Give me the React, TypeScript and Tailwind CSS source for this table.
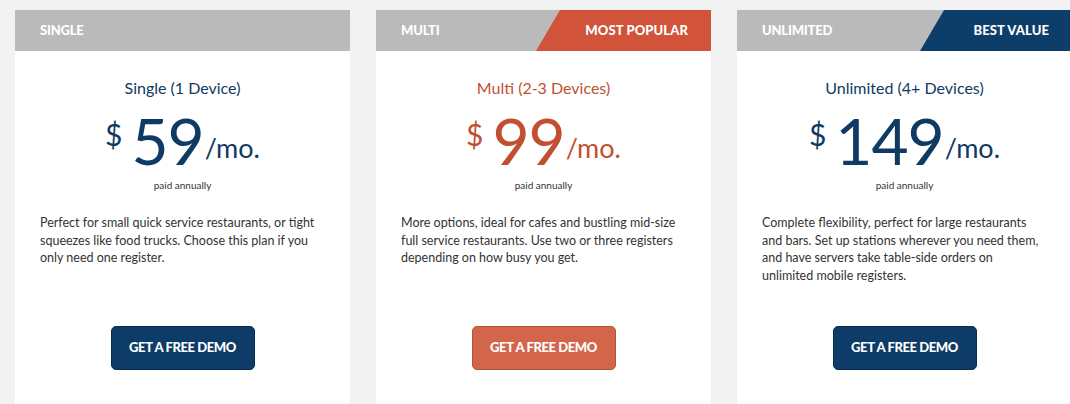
const plans = [
  {
    key: 'single',
    label: 'SINGLE',
    badge: null as null | { text: string; bg: string; w: string },
    title: 'Single (1 Device)',
    price: '59',
    accent: 'text-[#0f3a63]',
    lines: [
      'Perfect for small quick service restaurants, or tight',
      'squeezes like food trucks. Choose this plan if you',
      'only need one register.',
    ],
    btn: 'bg-[#0c3c67] border-[#072c4d]',
  },
  {
    key: 'multi',
    label: 'MULTI',
    badge: { text: 'MOST POPULAR', bg: 'bg-[#d0533a]', w: 'w-[175px]' },
    title: 'Multi (2-3 Devices)',
    price: '99',
    accent: 'text-[#c24f30]',
    lines: [
      'More options, ideal for cafes and bustling mid-size',
      'full service restaurants. Use two or three registers',
      'depending on how busy you get.',
    ],
    btn: 'bg-[#d3654b] border-[#b8513a]',
  },
  {
    key: 'unlimited',
    label: 'UNLIMITED',
    badge: { text: 'BEST VALUE', bg: 'bg-[#0d3e6a]', w: 'w-[152px]' },
    title: 'Unlimited (4+ Devices)',
    price: '149',
    accent: 'text-[#0f3a63]',
    lines: [
      'Complete flexibility, perfect for large restaurants',
      'and bars. Set up stations wherever you need them,',
      'and have servers take table-side orders on',
      'unlimited mobile registers.',
    ],
    btn: 'bg-[#0c3c67] border-[#072c4d]',
  },
]

function PlanCard({ plan }: { plan: (typeof plans)[number] }) {
  return (
    <div className="flex h-[420px] w-[335px] shrink-0 flex-col bg-white">
      {/* header strip */}
      <div className="relative flex h-[41px] items-center bg-[#bababa] pl-[25px] text-[13px] font-black tracking-[-0.2px] text-white">
        {plan.label}
        {plan.badge && (
          <div
            className={`absolute right-0 top-0 flex h-full items-center justify-end pr-[23px] text-[13px] font-black tracking-[0.1px] ${plan.badge.bg} ${plan.badge.w} [clip-path:polygon(24px_0,100%_0,100%_100%,0_100%)]`}
          >
            {plan.badge.text}
          </div>
        )}
      </div>

      {/* body */}
      <div className="flex flex-col items-center pt-[27px]">
        <h3 className={`text-[16px] leading-[20px] ${plan.accent}`}>{plan.title}</h3>

        <div className={`mt-[11px] flex items-start ${plan.accent}`}>
          <span className="mr-[9px] mt-[10px] text-[30px] leading-none">$</span>
          <span className="text-[64px] leading-none tracking-[-1px]">{plan.price}</span>
          <span className="ml-[1px] mt-[25px] text-[27px] leading-none">/mo.</span>
        </div>

        <p className="mt-[6px] text-[10px] leading-[12px] text-[#333]">paid annually</p>

        <div className="mt-[23px] w-full whitespace-nowrap px-[25px] text-left text-[12.5px] leading-[17.5px] text-[#333]">
          {plan.lines.map((l, i) => (
            <span key={i} className="block">
              {l}
            </span>
          ))}
        </div>
      </div>

      {/* CTA */}
      <div className="mt-auto flex justify-center pb-[60px]">
        <button
          className={`h-[44px] w-[144px] rounded-[5px] border text-[13px] font-black tracking-[-0.4px] text-white ${plan.btn}`}
        >
          GET A FREE DEMO
        </button>
      </div>
    </div>
  )
}

export default function App() {
  return (
    <div
      className="flex h-[404px] gap-[26px] overflow-hidden bg-[#f2f2f2] pl-[15px] pt-[10px]"
      style={{ fontFamily: 'Lato, "Open Sans", sans-serif' }}
    >
      {plans.map((p) => (
        <PlanCard key={p.key} plan={p} />
      ))}
    </div>
  )
}
